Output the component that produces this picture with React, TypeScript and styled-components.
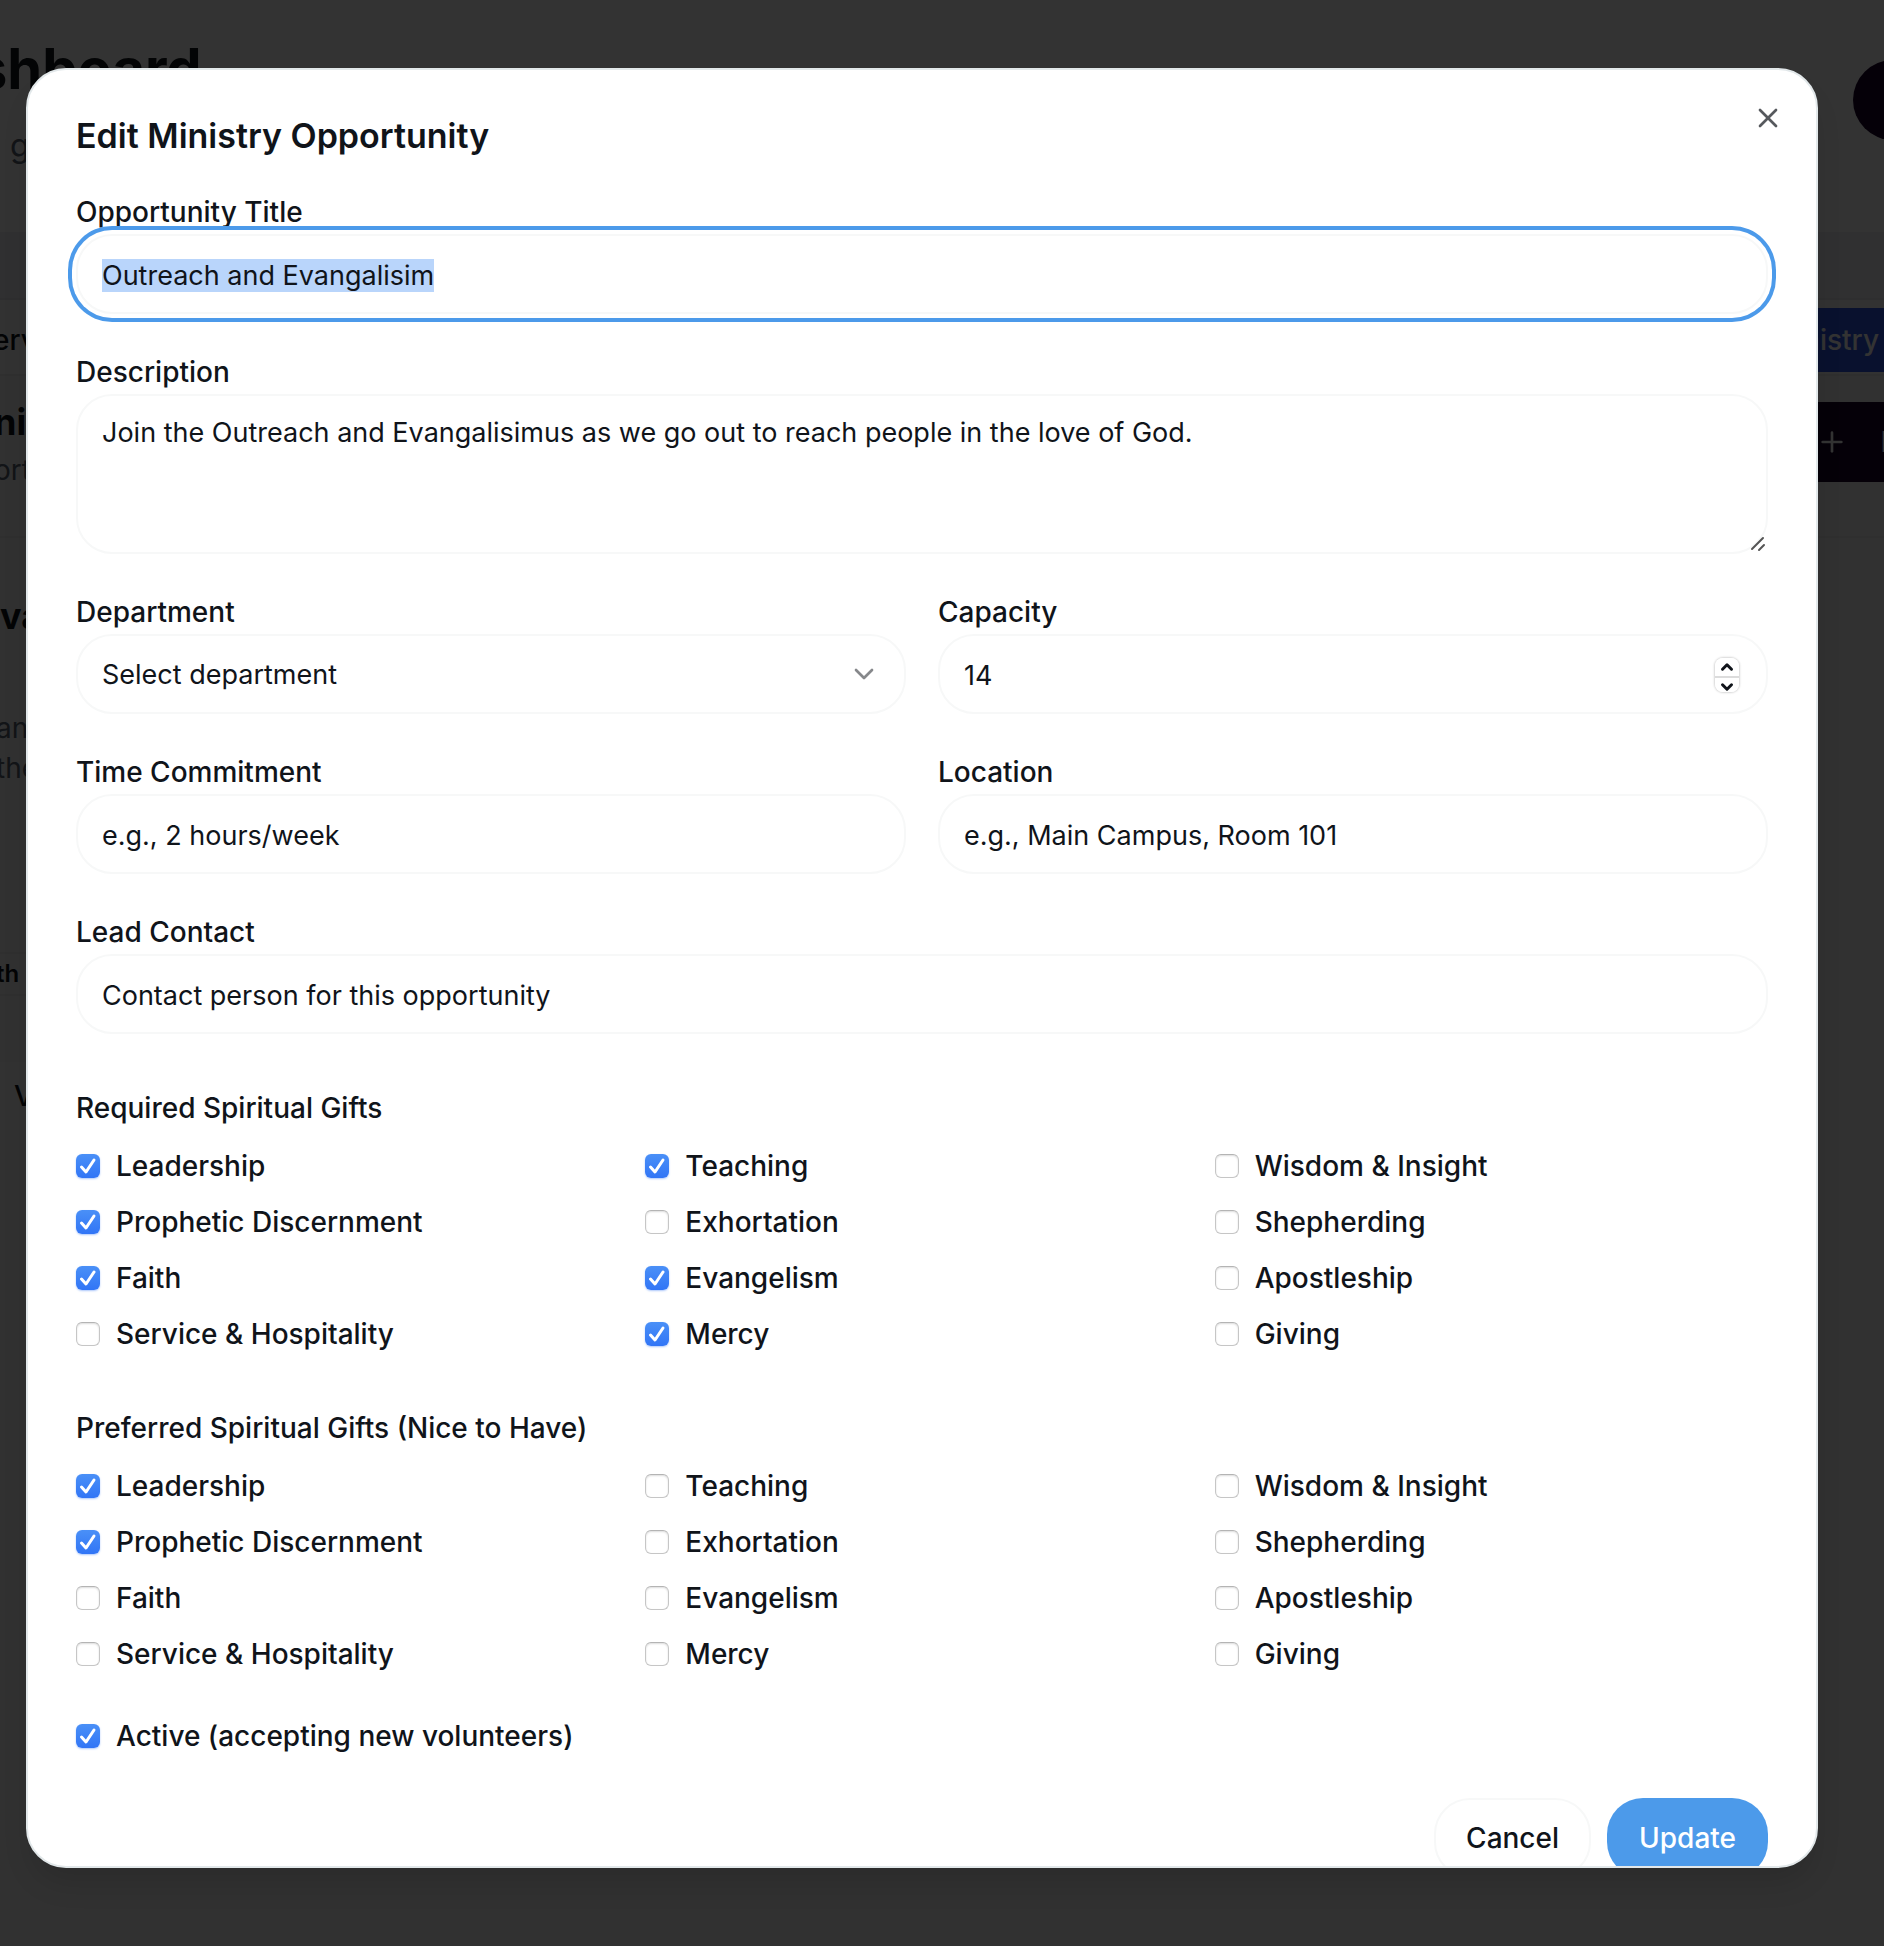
import React, { useEffect, useRef, useState } from 'react';
import styled, { createGlobalStyle } from 'styled-components';
import { ChevronDown, ChevronUp, Plus, X } from 'lucide-react';

const ink = '#10141a';
const hairline = '#f7f8f8';
const accent = '#4c9aea';

const GlobalStyle = createGlobalStyle`
  *, *::before, *::after { box-sizing: border-box; }
  body {
    margin: 0;
    background: #fff;
    color: ${ink};
    font-family: Inter, "Liberation Sans", sans-serif;
    font-size: 28px;
    line-height: 40px;
  }
  button, input, textarea, select { font: inherit; color: inherit; }
  ::selection { background: #b9d5fb; color: ${ink}; }
`;

/* ---------- page behind the dialog ---------- */

const Backdrop = styled.main`
  position: fixed;
  inset: 0;
  overflow: hidden;
  background: #f3f5f6;
`;

const PageHeader = styled.header`
  display: flex;
  justify-content: space-between;
  align-items: flex-start;
  height: 232px;
  padding-top: 32px;
  background: #fff;
`;

const PageHeading = styled.h1`
  margin: 0 0 0 -24px;
  font-size: 56px;
  line-height: 74px;
  font-weight: 700;
`;

const PageLead = styled.p`
  margin: 18px 0 0 10px;
  font-size: 32px;
  line-height: 44px;
  color: #5a6472;
`;

const RoundAction = styled.button`
  flex: none;
  width: 80px;
  height: 80px;
  margin: 28px -49px 0 0;
  border: 0;
  border-radius: 40px;
  background: #190028;
`;

const Strip = styled.div`
  height: 68px;
  background: #f0f1f2;
  border-bottom: 2px solid #e4e6e8;
`;

const TabBar = styled.nav`
  display: flex;
  justify-content: space-between;
  align-items: flex-start;
  height: 76px;
  padding-top: 8px;
  background: #fbfbfb;
  border-bottom: 2px solid #e9ebec;
`;

const Tab = styled.button<{ $active?: boolean }>`
  height: 64px;
  border: 0;
  padding: 0 5px;
  margin-left: ${(p) => (p.$active ? 0 : '-30px')};
  background: ${(p) => (p.$active ? '#2d55e6' : 'transparent')};
  color: ${(p) => (p.$active ? '#fff' : ink)};
  font-weight: 500;
`;

const Band = styled.section`
  display: flex;
  justify-content: space-between;
  height: 162px;
  padding-top: 26px;
  border-bottom: 2px solid #e9ebec;
`;

const BandText = styled.div`
  display: flex;
  flex-direction: column;
  gap: 8px;
  margin-left: -6px;
`;

const BandTitle = styled.h2`
  margin: 0;
  font-size: 36px;
  line-height: 40px;
  font-weight: 700;
`;

const Muted = styled.p`
  margin: 0;
  color: #5a6472;
`;

const NewButton = styled.button`
  display: flex;
  align-items: center;
  gap: 32px;
  height: 80px;
  margin-right: -56px;
  padding: 0 0 0 32px;
  border: 0;
  background: #190028;
  color: #fff;
`;

const Card = styled.section`
  display: flex;
  flex-direction: column;
  width: 120px;
  margin-left: -4px;
  padding-top: 56px;
`;

const CardTitle = styled.h3`
  margin: 0 0 70px 4px;
  font-size: 36px;
  line-height: 44px;
  font-weight: 700;
`;

const CardTag = styled.span`
  margin: 164px 0 66px;
  border: 2px solid #e9ebec;
  border-left: 0;
  font-size: 24px;
  font-weight: 600;
`;

const CardLink = styled.span`
  padding: 14px 18px;
  background: #fbfbfb;
  font-weight: 500;
`;

/* ---------- dialog ---------- */

const Scrim = styled.div`
  position: fixed;
  inset: 0;
  padding: 68px 66px 78px 26px;
  background: rgba(0, 0, 0, 0.8);
`;

const Dialog = styled.div`
  position: relative;
  height: 100%;
  border: 2px solid #e2e8ea;
  border-radius: 40px;
  background: #fff;
  overflow: hidden;
  box-shadow: 0 20px 30px -6px rgba(0, 0, 0, 0.12);
`;

const DialogBody = styled.form`
  display: flex;
  flex-direction: column;
  gap: 44px;
  height: 100%;
  padding: 48px;
  overflow-y: auto;
  scrollbar-width: none;
`;

const DialogTitle = styled.h2`
  margin: 0;
  font-size: 34px;
  line-height: 36px;
  font-weight: 600;
`;

const CloseButton = styled.button`
  position: absolute;
  top: 32px;
  right: 32px;
  display: flex;
  padding: 0;
  border: 0;
  background: none;
  opacity: 0.7;
`;

const Field = styled.div`
  display: flex;
  flex-direction: column;
  gap: 8px;
  min-width: 0;
`;

const Label = styled.label`
  line-height: 28px;
  font-weight: 500;
`;

const Columns = styled.div`
  display: grid;
  grid-template-columns: 1fr 1fr;
  gap: 32px;
`;

const Stack = styled.div`
  display: grid;
  align-items: center;

  & > * { grid-area: 1 / 1; }
`;

const controlBox = `
  width: 100%;
  margin: 0;
  border: 2px solid ${hairline};
  border-radius: 36px;
  background: #fff;
  font-size: 27px;
  outline: none;

  &:focus {
    box-shadow: 0 0 0 4px #fff, 0 0 0 8px ${accent};
  }
`;

const TextInput = styled.input`
  ${controlBox}
  height: 80px;
  padding: 2px 24px 0;
  appearance: textfield;

  &::placeholder { color: ${ink}; opacity: 1; }
  &::-webkit-inner-spin-button { appearance: none; margin: 0; }
`;

const TextArea = styled.textarea`
  ${controlBox}
  display: block;
  height: 160px;
  padding: 17px 24px;
  resize: none;
`;

const Select = styled.select`
  ${controlBox}
  height: 80px;
  padding: 2px 24px 0;
  appearance: none;
`;

const SelectArrow = styled(ChevronDown)`
  justify-self: end;
  margin-right: 26px;
  opacity: 0.5;
  pointer-events: none;
`;

const Grip = styled.svg`
  place-self: end;
  margin: 0 2px 2px 0;
  pointer-events: none;
`;

const Stepper = styled.div`
  justify-self: end;
  display: flex;
  flex-direction: column;
  width: 24px;
  height: 34px;
  margin: 2px 29px 0 0;
  border-radius: 8px;
  box-shadow: 0 0 2px 1px rgba(0, 0, 0, 0.16);
  overflow: hidden;
`;

const StepButton = styled.button`
  display: flex;
  flex: 1;
  align-items: center;
  justify-content: center;
  padding: 0;
  border: 0;
  background: #fff;

  & + & { border-top: 2px solid #dcdcdc; }
`;

const Group = styled.fieldset`
  margin: 16px 0 0;
  padding: 0;
  border: 0;
  min-width: 0;
`;

const Legend = styled.legend`
  padding: 0;
  margin-bottom: 24px;
  line-height: 28px;
  font-weight: 500;
`;

const GiftGrid = styled.div`
  display: grid;
  grid-template-columns: repeat(3, 1fr);
  gap: 16px;
`;

const Option = styled.label<{ $tight?: boolean }>`
  display: flex;
  align-items: center;
  gap: 16px;
  line-height: ${(p) => (p.$tight ? '28px' : '40px')};
  font-weight: 500;
`;

const Tick = styled.input`
  width: 24px;
  height: 24px;
  margin: 0;
  appearance: none;
  border: 1px solid #c6c6c6;
  border-top-color: #b4b4b4;
  border-radius: 6px;
  background: #fff;
  box-shadow: inset 0 1px 2px rgba(0, 0, 0, 0.14);

  &:checked {
    border: 0;
    background: linear-gradient(#4a90f7, #3175f6);
    box-shadow: 0 1px 2px rgba(49, 117, 246, 0.4);
  }
  & + svg { visibility: hidden; justify-self: center; pointer-events: none; }
  &:checked + svg { visibility: visible; }
`;

const Footer = styled.div`
  display: flex;
  justify-content: flex-end;
  gap: 16px;
`;

const Lower = styled.div`
  display: flex;
  flex-direction: column;
  gap: 48px;
  padding-top: 4px;
`;

const Button = styled.button<{ $primary?: boolean }>`
  flex: none;
  height: 80px;
  padding: 0 ${(p) => (p.$primary ? '32px' : '30px')};
  border: ${(p) => (p.$primary ? '0' : `2px solid ${hairline}`)};
  border-radius: 36px;
  background: ${(p) => (p.$primary ? accent : '#fff')};
  color: ${(p) => (p.$primary ? '#fff' : ink)};
  font-weight: 500;
`;

const gifts = [
  'Leadership', 'Teaching', 'Wisdom & Insight',
  'Prophetic Discernment', 'Exhortation', 'Shepherding',
  'Faith', 'Evangelism', 'Apostleship',
  'Service & Hospitality', 'Mercy', 'Giving',
];

function CheckOption({ label, checked, tight }: { label: string; checked: boolean; tight?: boolean }) {
  return (
    <Option $tight={tight}>
      <Stack>
        <Tick type="checkbox" defaultChecked={checked} />
        <svg width="18" height="18" viewBox="0 0 18 18" fill="none" stroke="#fff" strokeWidth="3" strokeLinecap="round" strokeLinejoin="round" aria-hidden="true">
          <path d="M2.5 10 7 15 15 3" />
        </svg>
      </Stack>
      {label}
    </Option>
  );
}

function GiftGroup({ title, selected }: { title: string; selected: string[] }) {
  return (
    <Group>
      <Legend>{title}</Legend>
      <GiftGrid>
        {gifts.map((gift) => (
          <CheckOption key={gift} label={gift} checked={selected.includes(gift)} />
        ))}
      </GiftGrid>
    </Group>
  );
}

export default function App() {
  const titleRef = useRef<HTMLInputElement>(null);
  const [capacity, setCapacity] = useState(14);

  useEffect(() => {
    titleRef.current?.focus({ preventScroll: true });
    titleRef.current?.select();
  }, []);

  return (
    <>
      <GlobalStyle />
      <Backdrop aria-hidden="true">
        <PageHeader>
          <div>
            <PageHeading>shboard</PageHeading>
            <PageLead>g</PageLead>
          </div>
          <RoundAction tabIndex={-1} />
        </PageHeader>
        <Strip />
        <TabBar>
          <Tab tabIndex={-1}>Serv</Tab>
          <Tab tabIndex={-1} $active>Ministry</Tab>
        </TabBar>
        <Band>
          <BandText>
            <BandTitle>ni</BandTitle>
            <Muted>ort</Muted>
          </BandText>
          <NewButton tabIndex={-1}>
            <Plus size={32} strokeWidth={2} />
            New
          </NewButton>
        </Band>
        <Card>
          <CardTitle>va</CardTitle>
          <Muted>an</Muted>
          <Muted>the</Muted>
          <CardTag>th</CardTag>
          <CardLink>V</CardLink>
        </Card>
      </Backdrop>

      <Scrim>
        <Dialog role="dialog" aria-modal="true" aria-labelledby="dialog-title">
          <DialogBody onSubmit={(e) => e.preventDefault()}>
            <DialogTitle id="dialog-title">Edit Ministry Opportunity</DialogTitle>

            <Field>
              <Label htmlFor="title">Opportunity Title</Label>
              <TextInput ref={titleRef} id="title" defaultValue="Outreach and Evangalisim" />
            </Field>

            <Field>
              <Label htmlFor="description">Description</Label>
              <Stack>
                <TextArea
                  id="description"
                  spellCheck={false}
                  defaultValue="Join the Outreach and Evangalisimus as we go out to reach people in the love of God."
                />
                <Grip width="16" height="16" viewBox="0 0 16 16" stroke="#555" strokeWidth="2" strokeLinecap="round" aria-hidden="true">
                  <path d="M2 13 13 2M9 14 14 9" />
                </Grip>
              </Stack>
            </Field>

            <Columns>
              <Field>
                <Label htmlFor="department">Department</Label>
                <Stack>
                  <Select id="department" defaultValue="">
                    <option value="">Select department</option>
                  </Select>
                  <SelectArrow size={32} strokeWidth={2} aria-hidden="true" />
                </Stack>
              </Field>
              <Field>
                <Label htmlFor="capacity">Capacity</Label>
                <Stack>
                  <TextInput
                    id="capacity"
                    type="number"
                    value={capacity}
                    onChange={(e) => setCapacity(Number(e.target.value))}
                  />
                  <Stepper>
                    <StepButton type="button" aria-label="Increase capacity" onClick={() => setCapacity(capacity + 1)}>
                      <ChevronUp size={18} strokeWidth={4} />
                    </StepButton>
                    <StepButton type="button" aria-label="Decrease capacity" onClick={() => setCapacity(capacity - 1)}>
                      <ChevronDown size={18} strokeWidth={4} />
                    </StepButton>
                  </Stepper>
                </Stack>
              </Field>
            </Columns>

            <Columns>
              <Field>
                <Label htmlFor="time">Time Commitment</Label>
                <TextInput id="time" placeholder="e.g., 2 hours/week" />
              </Field>
              <Field>
                <Label htmlFor="location">Location</Label>
                <TextInput id="location" placeholder="e.g., Main Campus, Room 101" />
              </Field>
            </Columns>

            <Field>
              <Label htmlFor="lead">Lead Contact</Label>
              <TextInput id="lead" placeholder="Contact person for this opportunity" />
            </Field>

            <GiftGroup
              title="Required Spiritual Gifts"
              selected={['Leadership', 'Teaching', 'Prophetic Discernment', 'Faith', 'Evangelism', 'Mercy']}
            />
            <GiftGroup
              title="Preferred Spiritual Gifts (Nice to Have)"
              selected={['Leadership', 'Prophetic Discernment']}
            />

            <Lower>
              <CheckOption label="Active (accepting new volunteers)" checked tight />
              <Footer>
                <Button type="button">Cancel</Button>
                <Button type="submit" $primary>Update</Button>
              </Footer>
            </Lower>
          </DialogBody>
          <CloseButton type="button" aria-label="Close">
            <X size={32} strokeWidth={2} />
          </CloseButton>
        </Dialog>
      </Scrim>
    </>
  );
}
